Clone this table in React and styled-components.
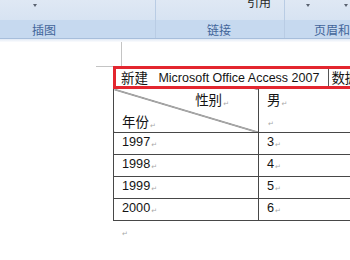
import React from "react";
import styled, { createGlobalStyle } from "styled-components";

const Global = createGlobalStyle`
  html, body { margin: 0; padding: 0; overflow: hidden; background: #fff; }
  body { width: 350px; height: 260px; }
`;

const Ribbon = styled.div`
  display: flex;
  width: 350px;
  overflow: hidden;
  border-bottom: 1px solid #a7bedb;
  font-family: "Noto Sans CJK SC", "Liberation Sans", sans-serif;
`;

const Group = styled.div`
  display: flex;
  flex-direction: column;
  flex: ${(p) => (p.$w ? `0 0 ${p.$w}px` : "1 0 auto")};
  border-right: ${(p) => (p.$w ? "1px solid #b9cce4" : "none")};
  box-shadow: ${(p) => (p.$w ? "1px 0 0 #eef4fb" : "none")};
`;

const Top = styled.div`
  height: 20px;
  display: flex;
  align-items: flex-start;
  gap: ${(p) => p.$gap || 0}px;
  padding-left: ${(p) => p.$pl}px;
  background: linear-gradient(#dfe8f4, #d7e3f2);
  overflow: hidden;
`;

const Arrow = styled.span`
  margin-top: 4px;
  width: 0;
  height: 0;
  border-left: 2px solid transparent;
  border-right: 2px solid transparent;
  border-top: 3px solid #5a6270;
`;

const TopText = styled.span`
  font-size: 12px;
  line-height: 12px;
  margin-top: -4px;
  color: #262626;
`;

const Label = styled.div`
  height: 18px;
  display: flex;
  align-items: center;
  padding-left: ${(p) => p.$pl}px;
  background: #c6d9ef;
  color: #42659a;
  font-size: 12px;
  white-space: nowrap;
  overflow: hidden;
`;

const Strip = styled.div`
  height: 3px;
  background: linear-gradient(#e2eaf5, #fbfcfe);
`;

const Page = styled.div`
  font-family: "Liberation Sans", "Noto Sans CJK SC", sans-serif;
  font-size: 12.7px;
  color: #141414;
`;

const CornerMark = styled.div`
  margin-left: 96px;
  width: 25px;
  height: 24px;
  border-right: 1px solid #c4c4c4;
  border-bottom: 1px solid #c4c4c4;
`;

const TitleBox = styled.div`
  position: relative;
  z-index: 1;
  margin-top: -1px;
  margin-left: 113px;
  width: 260px;
  height: 17px;
  border: 3px solid #e3262f;
  padding-left: 5px;
  display: flex;
  align-items: center;
  white-space: nowrap;
  overflow: hidden;
  font-size: 12.5px;
`;

const Cjk = styled.span`
  font-family: "Noto Sans CJK SC", sans-serif;
  font-size: 13.5px;
  line-height: 17px;
`;

const Cursor = styled.span`
  display: inline-block;
  margin-left: 9px;
  padding-left: 2px;
  border-left: 1px solid #555;
`;

const Ret = styled.span`
  font-family: "DejaVu Sans", sans-serif;
  font-size: 7px;
  color: #a8a8a8;
  margin-left: 1px;
  vertical-align: -1px;
`;

const Table = styled.table`
  margin-left: 113px;
  margin-top: -1px;
  border-collapse: collapse;
  table-layout: fixed;
  width: 310px;
`;

const Cell = styled.td`
  border: 1px solid #474747;
  padding: 0 0 0 ${(p) => p.$pl ?? 8}px;
  height: ${(p) => p.$h || 21}px;
  vertical-align: middle;
  white-space: nowrap;
  line-height: 14px;
`;

const DiagCell = styled(Cell)`
  padding: 0;
  background: linear-gradient(
    to top right,
    transparent calc(50% - 0.8px),
    #262626 50%,
    transparent calc(50% + 0.8px)
  );
`;

const Stack = styled.div`
  height: 43px;
  display: flex;
  flex-direction: column;
  justify-content: space-between;
  padding: 2px 0 3px;
  box-sizing: border-box;
`;

const Line = styled.div`
  text-align: ${(p) => p.$align || "left"};
  padding: ${(p) => (p.$align === "right" ? "0 29px 0 0" : "0 0 0 8px")};
  line-height: 17px;
`;

const EndMark = styled.div`
  margin: 5px 0 0 121px;
  line-height: 10px;
`;

const rows = [
  ["1997", "3"],
  ["1998", "4"],
  ["1999", "5"],
  ["2000", "6"],
];

export default function App() {
  return (
    <>
      <Global />
      <Ribbon>
        <Group $w={155}>
          <Top $pl={33}>
            <Arrow />
          </Top>
          <Label $pl={32}>插图</Label>
        </Group>
        <Group $w={128}>
          <Top $pl={91}>
            <TopText>引用</TopText>
          </Top>
          <Label $pl={51}>链接</Label>
        </Group>
        <Group>
          <Top $pl={21} $gap={34}>
            <Arrow />
            <Arrow />
          </Top>
          <Label $pl={29}>页眉和页脚</Label>
        </Group>
      </Ribbon>
      <Strip />
      <Page>
        <CornerMark />
        <TitleBox>
          <Cjk>新建</Cjk>
          {"\u00a0\u00a0\u00a0"}Microsoft Office Access 2007
          <Cursor>
            <Cjk>数据库</Cjk>
          </Cursor>
        </TitleBox>
        <Table>
          <colgroup>
            <col style={{ width: 145 }} />
            <col />
          </colgroup>
          <tbody>
            <tr>
              <DiagCell $h={43}>
                <Stack>
                  <Line $align="right">
                    <Cjk>性别</Cjk>
                    <Ret>↵</Ret>
                  </Line>
                  <Line>
                    <Cjk>年份</Cjk>
                    <Ret>↵</Ret>
                  </Line>
                </Stack>
              </DiagCell>
              <Cell $h={43} $pl={0}>
                <Stack>
                  <Line>
                    <Cjk>男</Cjk>
                    <Ret>↵</Ret>
                  </Line>
                  <Line>
                    <Ret>↵</Ret>
                  </Line>
                </Stack>
              </Cell>
            </tr>
            {rows.map(([y, v]) => (
              <tr key={y}>
                <Cell>
                  {y}
                  <Ret>↵</Ret>
                </Cell>
                <Cell>
                  {v}
                  <Ret>↵</Ret>
                </Cell>
              </tr>
            ))}
          </tbody>
        </Table>
        <EndMark>
          <Ret>↵</Ret>
        </EndMark>
      </Page>
    </>
  );
}
